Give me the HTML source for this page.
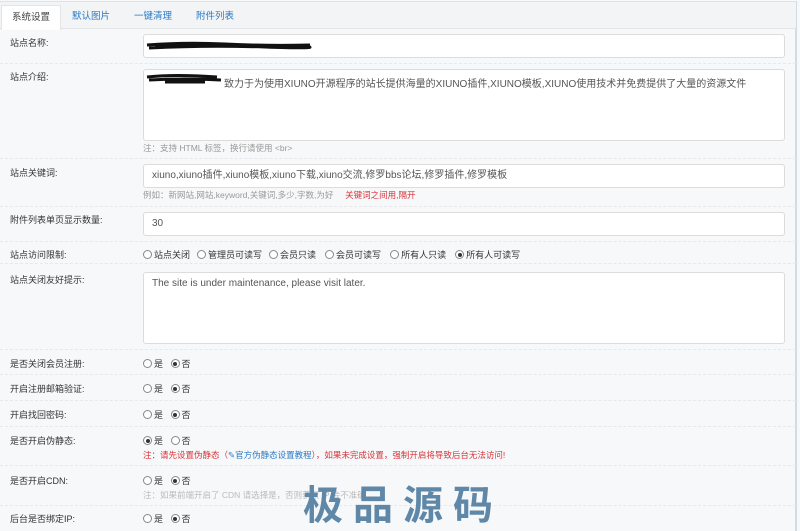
<!DOCTYPE html>
<html><head><meta charset="utf-8"><style>
*{box-sizing:border-box;margin:0;padding:0}
body{width:800px;height:523px;overflow:hidden;background:#f7f8f9;font-family:"Liberation Sans","Noto Sans CJK SC",sans-serif;font-size:9px;color:#333;position:relative}
.frame{position:absolute;left:0;top:1px;width:797px;height:530px;border-top:1px solid #dde3e6;border-right:2px solid #cfdce0}
.tabs{position:absolute;left:0;top:2px;width:796px;height:27px;background:#f3f4f5;border-bottom:1px solid #e2e4e6}
.tab{position:absolute;top:3px;height:25px;line-height:24px;font-size:9.5px;color:#2a7ac8}
.tab.act{left:1px;width:60px;background:#fff;color:#444;border:1px solid #e2e4e6;border-bottom:none;text-align:center}
.lbl{position:absolute;left:10px;font-size:9px;color:#333}
.inp{position:absolute;left:143px;width:642px;background:#fff;border:1px solid #dcdcdc;border-radius:3px;font-size:10px;color:#555;padding:0 8px}
.line{position:absolute;left:0;width:796px;border-top:1px dashed #e6e8ea}
.hint{position:absolute;left:143px;font-size:8.5px;color:#999}
.red{color:#d9323a}
.r{position:absolute;left:143px;font-size:9px;color:#333;white-space:nowrap}
.c{display:inline-block;width:9px;height:9px;border:1px solid #888;border-radius:50%;vertical-align:-1px;margin-right:2px;background:#fff;position:relative}
.c.on::after{content:"";position:absolute;left:1.5px;top:1.5px;width:4px;height:4px;border-radius:50%;background:#333}
.r .g{margin-left:7px}
.wm{position:absolute;left:303px;top:478px;font-size:40px;font-weight:bold;color:#5f88a8;letter-spacing:10px;font-family:"Noto Sans CJK SC",sans-serif;line-height:48px}
</style></head><body>
<div class="frame"></div>
<div class="tabs">
<div class="tab act">系统设置</div>
<div class="tab" style="left:72px">默认图片</div>
<div class="tab" style="left:134px">一键清理</div>
<div class="tab" style="left:196px">附件列表</div>
</div>

<div class="lbl" style="top:36px">站点名称:</div>
<div class="inp" style="top:34px;height:24px"></div>
<svg style="position:absolute;left:145px;top:40px" width="170" height="12"><path d="M2 5 Q40 2 80 4 T165 5 M4 8 Q60 5 120 7 T160 6 M10 6 L150 6" stroke="#111" stroke-width="3" fill="none"/></svg>
<div class="line" style="top:63px"></div>

<div class="lbl" style="top:70px">站点介绍:</div>
<div class="inp" style="top:69px;height:72px;padding-top:5px;padding-left:80px">致力于为使用XIUNO开源程序的站长提供海量的XIUNO插件,XIUNO模板,XIUNO使用技术并免费提供了大量的资源文件</div>
<svg style="position:absolute;left:145px;top:72px" width="80" height="14"><path d="M2 5 Q30 2 72 5 M4 8 Q40 6 76 8 M20 10 L60 10" stroke="#111" stroke-width="3" fill="none"/></svg>
<div class="hint" style="top:142px">注：支持 HTML 标签，换行请使用 &lt;br&gt;</div>
<div class="line" style="top:158px"></div>

<div class="lbl" style="top:166px">站点关键词:</div>
<div class="inp" style="top:164px;height:24px;line-height:22px">xiuno,xiuno插件,xiuno模板,xiuno下载,xiuno交流,修罗bbs论坛,修罗插件,修罗模板</div>
<div class="hint" style="top:189px">例如：新网站,网站,keyword,关键词,多少,字数,为好 &nbsp;&nbsp;&nbsp; <span class="red">关键词之间用,隔开</span></div>
<div class="line" style="top:206px"></div>

<div class="lbl" style="top:213px">附件列表单页显示数量:</div>
<div class="inp" style="top:212px;height:24px;line-height:22px">30</div>
<div class="line" style="top:241px"></div>

<div class="lbl" style="top:248px">站点访问限制:</div>
<div class="r" style="top:248px"><span class="c"></span>站点关闭<span class="c g"></span>管理员可读写<span class="c g"></span>会员只读<span class="c g" style="margin-left:9px"></span>会员可读写<span class="c g" style="margin-left:9px"></span>所有人只读<span class="c on g" style="margin-left:9px"></span>所有人可读写</div>
<div class="line" style="top:263px"></div>

<div class="lbl" style="top:273px">站点关闭友好提示:</div>
<div class="inp" style="top:272px;height:72px;padding-top:5px">The site is under maintenance, please visit later.</div>
<div class="line" style="top:349px"></div>

<div class="lbl" style="top:357px">是否关闭会员注册:</div>
<div class="r" style="top:357px"><span class="c"></span>是 &nbsp;&nbsp;<span class="c on"></span>否</div>
<div class="line" style="top:374px"></div>

<div class="lbl" style="top:382px">开启注册邮箱验证:</div>
<div class="r" style="top:382px"><span class="c"></span>是 &nbsp;&nbsp;<span class="c on"></span>否</div>
<div class="line" style="top:400px"></div>

<div class="lbl" style="top:408px">开启找回密码:</div>
<div class="r" style="top:408px"><span class="c"></span>是 &nbsp;&nbsp;<span class="c on"></span>否</div>
<div class="line" style="top:426px"></div>

<div class="lbl" style="top:434px">是否开启伪静态:</div>
<div class="r" style="top:434px"><span class="c on"></span>是 &nbsp;&nbsp;<span class="c"></span>否</div>
<div class="hint red" style="top:449px;color:#d9323a">注：请先设置伪静态（<span style="color:#2a7ac8">✎官方伪静态设置教程</span>），如果未完成设置，强制开启将导致后台无法访问!</div>
<div class="line" style="top:465px"></div>

<div class="lbl" style="top:474px">是否开启CDN:</div>
<div class="r" style="top:474px"><span class="c"></span>是 &nbsp;&nbsp;<span class="c on"></span>否</div>
<div class="hint" style="top:489px;color:#bbb">注：如果前端开启了 CDN 请选择是，否则获取 IP 会不准确</div>
<div class="line" style="top:505px"></div>

<div class="lbl" style="top:512px">后台是否绑定IP:</div>
<div class="r" style="top:512px"><span class="c"></span>是 &nbsp;&nbsp;<span class="c on"></span>否</div>

<div class="wm">极品源码</div>
</body></html>
